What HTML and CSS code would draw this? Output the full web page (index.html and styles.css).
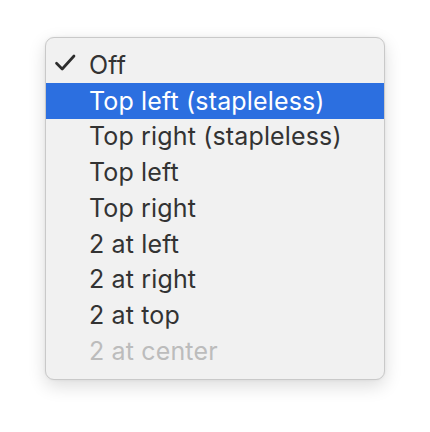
FILE: index.html
```html
<!DOCTYPE html>
<html>
<head>
<meta charset="utf-8">
<link rel="stylesheet" href="styles.css">
</head>
<body>
<div class="menu">
  <div class="item"><span class="check"><svg width="22" height="17" viewBox="0 0 22 17"><path d="M2.5 9.3 L8.2 15 L20 2" fill="none" stroke="#2d2d2d" stroke-width="2.7" stroke-linecap="round" stroke-linejoin="round"/></svg></span><span class="label">Off</span></div>
  <div class="item selected"><span class="check"></span><span class="label">Top left (stapleless)</span></div>
  <div class="item"><span class="check"></span><span class="label">Top right (stapleless)</span></div>
  <div class="item"><span class="check"></span><span class="label">Top left</span></div>
  <div class="item"><span class="check"></span><span class="label">Top right</span></div>
  <div class="item"><span class="check"></span><span class="label">2 at left</span></div>
  <div class="item"><span class="check"></span><span class="label">2 at right</span></div>
  <div class="item"><span class="check"></span><span class="label">2 at top</span></div>
  <div class="item disabled"><span class="check"></span><span class="label">2 at center</span></div>
</div>
</body>
</html>
```
FILE: styles.css
```css
html, body {
  margin: 0;
  padding: 0;
  background: #ffffff;
}
body {
  min-height: 432px;
  box-sizing: border-box;
  padding: 37px 0 0 45px;
  font-family: Inter, "Liberation Sans", sans-serif;
}
.menu {
  width: 338px;
  padding: 9px 0 10px;
  background: #f1f1f1;
  border: 1px solid #c9c9c9;
  border-radius: 9px;
  box-shadow: 0 6px 18px rgba(0, 0, 0, 0.14), 0 0 3px rgba(0, 0, 0, 0.06);
}
.item {
  display: flex;
  align-items: center;
  height: 35.75px;
  color: #333333;
  font-size: 25px;
  letter-spacing: 0.15px;
}
.check {
  width: 43px;
  display: flex;
  justify-content: flex-end;
  align-items: center;
}
.check svg {
  margin-right: 13px;
  margin-top: -4px;
}
.selected {
  background: #2c6fe0;
  color: #ffffff;
}
.disabled {
  color: #bcbcbc;
}
```
